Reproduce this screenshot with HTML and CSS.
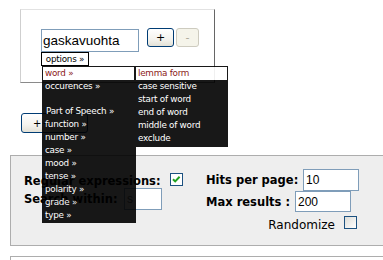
FILE: index.html
```html
<!DOCTYPE html>
<html lang="en">
<head>
  <meta charset="UTF-8">
  <meta name="viewport" content="width=device-width, initial-scale=1.0">
  <title>Search</title>
  <link rel="stylesheet" href="styles.css">
</head>
<body>
<div class="page">

  <div class="query-box">
    <div class="word-row">
      <div class="word-field">
        <input class="word-input" type="text" value="gaskavuohta">
        <div class="options-tab">options &raquo;</div>
      </div>
      <button class="btn-add">+</button>
      <button class="btn-remove" disabled>-</button>
    </div>
  </div>

  <button class="btn-more">++</button>

  <div class="settings">
    <div class="settings-left">
      <div class="set-row row-regex">
        <span class="set-label">Regular expressions:</span>
        <span class="check is-checked">
          <svg width="11" height="11" viewBox="0 0 11 11"><path d="M2 5.2 L4.2 7.4 L8.6 2.8" fill="none" stroke="#21a121" stroke-width="2"/></svg>
        </span>
      </div>
      <div class="set-row row-within">
        <span class="set-label label-within">Search within:</span>
        <input class="small-input input-within" type="text" value="s">
      </div>
    </div>

    <div class="settings-right">
      <div class="set-row row-hits">
        <span class="set-label label-hits">Hits per page:</span>
        <input class="small-input" type="text" value="10">
      </div>
      <div class="set-row row-max">
        <span class="set-label label-max">Max results :</span>
        <input class="small-input" type="text" value="200">
      </div>
      <div class="set-row row-random">
        <span class="random-label">Randomize</span>
        <span class="check"></span>
      </div>
    </div>
  </div>

  <div class="next-box"></div>

  <!-- open options menu, drawn over the page -->
  <div class="menu">
    <ul class="menu-main">
      <li class="active">word &raquo;</li>
      <li>occurences &raquo;</li>
      <li class="spacer"></li>
      <li class="pos">Part of Speech &raquo;</li>
      <li>function &raquo;</li>
      <li>number &raquo;</li>
      <li>case &raquo;</li>
      <li>mood &raquo;</li>
      <li>tense &raquo;</li>
      <li>polarity &raquo;</li>
      <li>grade &raquo;</li>
      <li>type &raquo;</li>
    </ul>
    <ul class="menu-sub">
      <li class="active">lemma form</li>
      <li>case sensitive</li>
      <li>start of word</li>
      <li>end of word</li>
      <li>middle of word</li>
      <li>exclude</li>
    </ul>
  </div>

</div>
</body>
</html>
```

FILE: styles.css
```css
body {
  margin: 0;
  background-color: #ffffff;
  font-family: "DejaVu Sans", Verdana, sans-serif;
  color: #000000;
}

.page {
  position: relative;
  height: 260px;
  padding-top: 9px;
  box-sizing: border-box;
  overflow: hidden;
}

/* top query box */
.query-box {
  margin-left: 20px;
  width: 195px;
  height: 74px;
  box-sizing: border-box;
  border: 1px solid;
  border-color: #e2e2e2 #666666 #8a8a8a #cfcfcf;
  padding: 19px 0 0 20px;
}

.word-row {
  display: flex;
  align-items: flex-start;
}

.word-field {
  display: flex;
  flex-direction: column;
}

.word-input {
  width: 98px;
  height: 23px;
  box-sizing: border-box;
  margin: 0;
  padding: 0 0 0 1px;
  border: 1px solid #7f9db9;
  font-family: "Liberation Sans", Arial, sans-serif;
  font-size: 13.5px;
  color: #000;
  outline: none;
}

.options-tab {
  width: 48px;
  height: 14px;
  box-sizing: border-box;
  border: 1px solid #000;
  background-color: #fff;
  font-size: 8.8px;
  letter-spacing: -0.25px;
  line-height: 12px;
  text-align: center;
  white-space: nowrap;
}

button {
  margin: 0;
  padding: 0;
  font-family: "DejaVu Sans", Verdana, sans-serif;
  font-size: 11px;
}

.btn-add,
.btn-remove {
  height: 19px;
  margin-top: -1px;
  border-radius: 3px;
}

.btn-add {
  width: 27px;
  margin-left: 8px;
  border: 1px solid #003c74;
  background: linear-gradient(#ffffff, #f4f3ee 60%, #e3e1d6);
  color: #000;
}

.btn-remove {
  width: 23px;
  margin-left: 2px;
  border: 1px solid #cdcbbf;
  background-color: #f5f4ea;
  color: #aca899;
}

.btn-more {
  display: block;
  width: 67px;
  height: 20px;
  margin: 30px 0 0 21px;
  padding-left: 11px;
  text-align: left;
  font-size: 10px;
  letter-spacing: 1px;
  border: 1px solid #003c74;
  border-radius: 3px;
  background: linear-gradient(#ffffff, #f4f3ee 60%, #e3e1d6);
  color: #000;
}

/* settings panel */
.settings {
  display: flex;
  margin: 22px 0 0 10px;
  width: 400px;
  height: 91px;
  box-sizing: border-box;
  border: 1px solid #adadad;
  background-color: #eeeeee;
  padding-left: 13px;
}

.settings-left {
  width: 182px;
  padding-top: 18px;
}

.settings-right {
  width: 153px;
  padding-top: 13px;
}

.set-row {
  display: flex;
  align-items: center;
}

.set-label {
  font-weight: bold;
  font-size: 11.5px;
  white-space: nowrap;
}

.row-regex {
  height: 14px;
}

.row-regex .check {
  align-self: flex-start;
  margin: -1px 0 0 9px;
}

.row-within,
.row-hits {
  height: 22px;
}

.row-max {
  height: 21px;
}

.label-within {
  width: 100px;
}

.label-hits {
  width: 97px;
}

.label-max {
  width: 89px;
}

.small-input {
  width: 56px;
  height: 22px;
  box-sizing: border-box;
  margin: 0;
  padding: 0 0 0 2px;
  border: 1px solid #7f9db9;
  background-color: #fff;
  font-family: "Liberation Sans", Arial, sans-serif;
  font-size: 12px;
  color: #000;
  outline: none;
}

.row-max .small-input {
  height: 21px;
}

.input-within {
  width: 38px;
  color: #666;
}

.row-random {
  justify-content: flex-end;
  align-items: flex-start;
  height: 13px;
  margin-top: 4px;
  padding-right: 2px;
}

.random-label {
  margin-top: 2px;
  font-size: 12px;
  line-height: 14px;
}

.row-random .check {
  margin-left: 9px;
  background: linear-gradient(135deg, #dcdcd7, #ffffff);
}

.check {
  display: inline-block;
  width: 13px;
  height: 13px;
  box-sizing: border-box;
  border: 1px solid #1c5180;
  background-color: #fff;
}

.check svg {
  display: block;
}

.next-box {
  margin: 10px 0 0 10px;
  height: 20px;
  border-top: 1px solid #adadad;
  border-left: 1px solid #adadad;
}

/* options menu */
.menu {
  position: absolute;
  left: 42px;
  top: 66px;
  opacity: 0.9;
  font-size: 8.8px;
  letter-spacing: -0.25px;
}

.menu ul {
  margin: 0;
  list-style: none;
  background-color: #000;
  box-sizing: border-box;
  width: 94px;
}

.menu-main {
  padding: 1px 2px 1px 1px;
}

.menu-sub {
  position: absolute;
  left: 92px;
  top: 0;
  padding: 1px 1px 2px 2px;
}

.menu li {
  height: 13px;
  line-height: 13px;
  padding-left: 2px;
  color: #fff;
  white-space: nowrap;
}

.menu li.active {
  background-color: #fff;
  color: #800000;
}

.menu li.spacer {
  height: 12px;
}

.menu li.pos {
  padding-left: 3px;
}
```
